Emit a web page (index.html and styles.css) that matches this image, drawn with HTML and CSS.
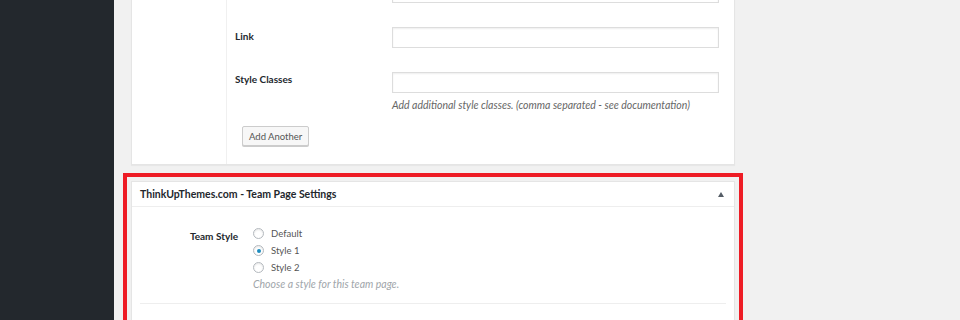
FILE: index.html
```html
<!DOCTYPE html>
<html lang="en">
  <head>
    <meta charset="UTF-8" />
    <meta name="viewport" content="width=device-width, initial-scale=1.0" />
    <title>Edit Page - Team Settings</title>
    <link rel="stylesheet" href="styles.css">
  </head>
  <body>
    <div class="wrap">
      <div class="admin-menu"></div>

      <div class="content">
        <div class="postbox fields">
          <div class="fields-side"></div>
          <div class="fields-main">
            <div class="field-row">
              <label class="field-label"></label>
              <div class="field-input">
                <input type="text" class="text-input" />
              </div>
            </div>
            <div class="field-row">
              <label class="field-label" for="slide-link">Link</label>
              <div class="field-input">
                <input type="text" id="slide-link" class="text-input" />
              </div>
            </div>
            <div class="field-row">
              <label class="field-label" for="slide-classes">Style Classes</label>
              <div class="field-input">
                <input type="text" id="slide-classes" class="text-input" />
                <p class="description">Add additional style classes. (comma separated - see documentation)</p>
              </div>
            </div>
            <button type="button" class="button">Add Another</button>
          </div>
        </div>

        <div class="highlight">
          <div class="postbox">
            <div class="postbox-header">
              <h2>ThinkUpThemes.com - Team Page Settings</h2>
              <span class="toggle-indicator"></span>
            </div>
            <div class="inside">
              <div class="option">
                <div class="option-label">Team Style</div>
                <div class="option-field">
                  <label class="radio"><span class="radio-box"></span>Default</label>
                  <label class="radio"><span class="radio-box checked"></span>Style 1</label>
                  <label class="radio"><span class="radio-box"></span>Style 2</label>
                  <p class="description light">Choose a style for this team page.</p>
                </div>
              </div>
              <div class="separator"></div>
            </div>
          </div>
        </div>
      </div>
    </div>
  </body>
</html>
```

FILE: styles.css
```css
body {
  margin: 0;
  background-color: #f1f1f1;
  font-family: Lato, "Open Sans", Arial, sans-serif;
  font-size: 10px;
  color: #444;
  overflow: hidden;
}
.wrap {
  display: flex;
  min-height: 320px;
}
.admin-menu {
  width: 114px;
  flex-shrink: 0;
  background-color: #23282d;
}
.content {
  padding-left: 17px;
}
.postbox {
  width: 602px;
  background-color: #fff;
  border: 1px solid #e5e5e5;
  box-shadow: 0 1px 1px rgba(0, 0, 0, 0.04);
}

/* repeatable fields box */
.fields {
  display: flex;
  margin-top: -29px;
}
.fields-side {
  width: 94px;
  border-right: 1px solid #f0f0f0;
}
.fields-main {
  flex-grow: 1;
  padding: 10px 15px 18px 8px;
}
.field-row {
  display: flex;
  margin-bottom: 24px;
}
.field-row:last-of-type {
  margin-bottom: 13px;
}
.field-label {
  width: 157px;
  line-height: 18px;
  font-weight: 700;
  color: #23282d;
}
.field-row:last-of-type .field-label {
  margin-top: -2px;
}
.field-input {
  flex-grow: 1;
}
.text-input {
  display: block;
  box-sizing: border-box;
  width: 100%;
  height: 21px;
  margin: 0;
  border: 1px solid #ddd;
  box-shadow: inset 0 1px 2px rgba(0, 0, 0, 0.07);
  background-color: #fff;
}
.description {
  margin: 4px 0 0;
  line-height: 16px;
  font-size: 10.5px;
  font-style: italic;
  color: #666;
}
.description.light {
  margin: 0;
  line-height: 17px;
  color: #a0a5aa;
}
.button {
  margin-left: 7px;
  height: 20px;
  padding: 0 6px;
  font-family: inherit;
  font-size: 9.5px;
  color: #555;
  background-color: #f7f7f7;
  border: 1px solid #ccc;
  border-radius: 2px;
  box-shadow: 0 1px 0 #ccc;
}

/* highlighted meta box */
.highlight {
  margin: 8px 0 0 -8px;
  padding: 4px;
  border: 4px solid #ee1c25;
  width: 604px;
}
.postbox-header {
  display: flex;
  align-items: center;
  justify-content: space-between;
  height: 24px;
  padding: 0 10px 0 8px;
  border-bottom: 1px solid #eee;
}
.postbox-header h2 {
  margin: 0;
  font-size: 10.5px;
  font-weight: 700;
  color: #23282d;
}
.toggle-indicator {
  width: 0;
  height: 0;
  border-left: 3px solid transparent;
  border-right: 3px solid transparent;
  border-bottom: 5px solid #555d66;
}
.inside {
  padding: 18px 8px 40px;
}
.option {
  display: flex;
}
.option-label {
  width: 98px;
  margin-top: 3px;
  line-height: 17px;
  text-align: right;
  font-weight: 700;
  color: #23282d;
}
.option-field {
  margin-left: 15px;
}
.radio {
  display: flex;
  align-items: center;
  line-height: 17px;
  font-size: 9.5px;
  color: #555;
}
.radio-box {
  box-sizing: border-box;
  width: 11px;
  height: 11px;
  margin-right: 7px;
  border: 1px solid #b4b9be;
  border-radius: 50%;
  background-color: #fff;
  box-shadow: inset 0 1px 2px rgba(0, 0, 0, 0.1);
  display: flex;
  align-items: center;
  justify-content: center;
}
.radio-box.checked::before {
  content: "";
  width: 4px;
  height: 4px;
  border-radius: 50%;
  background-color: #1e8cbe;
}
.separator {
  margin-top: 10px;
  border-top: 1px solid #eee;
}
```
